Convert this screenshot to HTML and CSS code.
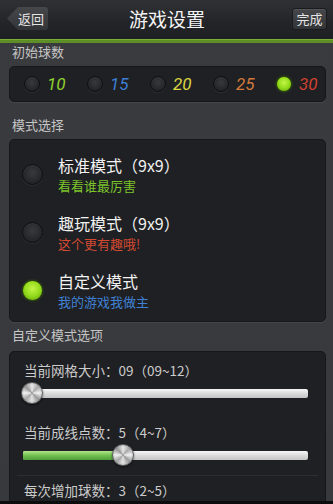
FILE: index.html
```html
<!DOCTYPE html>
<html lang="zh">
<head>
<meta charset="utf-8">
<link rel="stylesheet" href="styles.css">
</head>
<body>
<div class="screen">
  <header class="topbar">
    <div class="topbar-left"><span class="btn-back">返回</span></div>
    <h1 class="title">游戏设置</h1>
    <div class="topbar-right"><span class="btn-done">完成</span></div>
  </header>

  <div class="section-label label-first">初始球数</div>
  <div class="panel count-panel">
    <div class="count-item"><span class="radio radio-sm"></span><span class="num num-green">10</span></div>
    <div class="count-item"><span class="radio radio-sm"></span><span class="num num-blue">15</span></div>
    <div class="count-item"><span class="radio radio-sm"></span><span class="num num-yellow">20</span></div>
    <div class="count-item"><span class="radio radio-sm"></span><span class="num num-orange">25</span></div>
    <div class="count-item"><span class="radio radio-sm radio-on"></span><span class="num num-red">30</span></div>
  </div>

  <div class="section-label label-second">模式选择</div>
  <div class="panel mode-panel">
    <div class="mode-item">
      <span class="radio radio-lg"></span>
      <div class="mode-text">
        <div class="mode-title">标准模式（9x9）</div>
        <div class="mode-sub sub-green">看看谁最厉害</div>
      </div>
    </div>
    <div class="mode-item">
      <span class="radio radio-lg"></span>
      <div class="mode-text">
        <div class="mode-title">趣玩模式（9x9）</div>
        <div class="mode-sub sub-red">这个更有趣哦!</div>
      </div>
    </div>
    <div class="mode-item">
      <span class="radio radio-lg radio-on"></span>
      <div class="mode-text">
        <div class="mode-title">自定义模式</div>
        <div class="mode-sub sub-blue">我的游戏我做主</div>
      </div>
    </div>
  </div>

  <div class="section-label label-third">自定义模式选项</div>
  <div class="panel options-panel">
    <div class="opt-label">当前网格大小：09（09~12）</div>
    <div class="slider">
      <div class="track"><div class="fill" style="width:0px"></div></div>
      <span class="thumb" style="left:-2px"></span>
    </div>
    <div class="opt-label opt-gap">当前成线点数：5（4~7）</div>
    <div class="slider">
      <div class="track"><div class="fill" style="width:95px"></div></div>
      <span class="thumb" style="left:89px"></span>
    </div>
    <div class="separator"></div>
    <div class="opt-label">每次增加球数：3（2~5）</div>
  </div>

  <div class="bottom-strip"></div>
</div>
</body>
</html>
```

FILE: styles.css
```css
* { box-sizing: border-box; }
html, body { margin: 0; padding: 0; }
body {
  background: #3a3b3f;
  font-family: "Noto Sans CJK SC", "Noto Sans", sans-serif;
  color: #d0d0d0;
}
.screen {
  position: relative;
  width: 333px;
  height: 504px;
  overflow: hidden;
  background: linear-gradient(#3a3b3f, #38393d);
}

/* top bar */
.topbar {
  height: 43px;
  display: grid;
  grid-template-columns: 1fr auto 1fr;
  align-items: center;
  padding: 0 6px 3px 7px;
  background: linear-gradient(#303134, #232427 60%, #1e1f22);
  border-bottom: 3px solid #5e8e26;
  box-shadow: inset 0 -1px 0 #7fae38;
}
.topbar-left { display: flex; justify-content: flex-start; }
.topbar-right { display: flex; justify-content: flex-end; }
.title {
  margin: 0;
  font-size: 19px;
  font-weight: normal;
  color: #f4f4f4;
  line-height: 28px;
}
.btn-back {
  display: flex;
  align-items: center;
  justify-content: flex-end;
  width: 41px;
  height: 23px;
  padding-right: 4px;
  font-size: 13px;
  line-height: 19px;
  color: #e4e4e4;
  background: linear-gradient(#46474a, #333437);
  clip-path: polygon(11px 0, 100% 0, 100% 100%, 11px 100%, 0 50%);
  border-radius: 0 3px 3px 0;
}
.btn-done {
  display: flex;
  align-items: center;
  justify-content: center;
  width: 35px;
  height: 22px;
  font-size: 13px;
  line-height: 19px;
  color: #e4e4e4;
  background: linear-gradient(#46474a, #333437);
  border: 1px solid #1a1b1d;
  border-radius: 3px;
  box-shadow: inset 0 1px 0 rgba(255,255,255,0.08);
}

/* section labels */
.section-label {
  font-size: 13px;
  line-height: 20px;
  color: #c6c6c6;
  padding-left: 12px;
}
.label-first { margin-top: -1px; margin-bottom: 4px; }
.label-second { margin-top: 13px; margin-bottom: 4px; }
.label-third { margin-top: 3px; margin-bottom: 6px; }

/* panels */
.panel {
  margin: 0 7px 0 9px;
  background: #1f2023;
  border: 1px solid #16171a;
  border-radius: 5px;
  box-shadow: 0 1px 0 rgba(255,255,255,0.06);
}

/* ball count */
.count-panel {
  height: 36px;
  display: grid;
  grid-template-columns: repeat(5, 1fr);
  align-items: center;
}
.count-item {
  display: flex;
  align-items: center;
  padding-left: 14px;
  gap: 7px;
}
.num {
  font-family: Roboto, "Liberation Sans", sans-serif;
  font-style: italic;
  font-size: 17px;
  line-height: 20px;
}
.num-green { color: #8fd12e; }
.num-blue { color: #3c7fd4; }
.num-yellow { color: #dcd640; }
.num-orange { color: #d2793a; }
.num-red { color: #d2402f; }

/* radios */
.radio {
  display: block;
  flex: none;
  border-radius: 50%;
  background: radial-gradient(circle at 50% 40%, #38393c 0, #28292c 55%, #18191b 100%);
  border: 1px solid #0f1011;
  box-shadow: 0 1px 1px rgba(255,255,255,0.07), inset 0 1px 1px rgba(255,255,255,0.06);
}
.radio-sm { width: 16px; height: 16px; }
.radio-lg { width: 21px; height: 21px; }
.radio-on {
  background: radial-gradient(circle at 50% 40%, #c2f547 0, #95dc1c 50%, #5f9c0c 100%);
  border: 1px solid #2d4a0b;
  box-shadow: 0 0 2px rgba(120,200,20,0.35);
}

/* modes */
.mode-panel { padding: 5px 0 2px; }
.mode-item {
  height: 58px;
  display: flex;
  align-items: center;
  padding-left: 12px;
  gap: 15px;
}
.mode-text { display: flex; flex-direction: column; }
.mode-title {
  font-size: 16px;
  line-height: 23px;
  color: #f2f2f2;
}
.mode-sub {
  font-size: 13px;
  line-height: 19px;
  margin-top: -1px;
}
.sub-green { color: #7cc42a; }
.sub-red { color: #d44a32; }
.sub-blue { color: #3f80d4; }

/* options */
.options-panel {
  padding: 8px 17px 20px 13px;
}
.opt-label {
  font-size: 13.5px;
  line-height: 20px;
  color: #cbcbcb;
  padding-left: 1px;
}
.opt-gap { margin-top: 16px; }
.slider {
  position: relative;
  height: 26px;
  display: flex;
  align-items: center;
}
.track {
  width: 100%;
  height: 9px;
  border-radius: 2px;
  background: linear-gradient(#f6f6f6, #d6d6d6 60%, #c4c4c4);
  overflow: hidden;
}
.fill {
  height: 100%;
  background: linear-gradient(#b2e58a, #72c050 50%, #4f9d3a);
}
.thumb {
  position: absolute;
  top: 2px;
  width: 22px;
  height: 22px;
  border-radius: 50%;
  border: 1px solid #5d5e60;
  background:
    radial-gradient(circle, rgba(255,255,255,0.0) 0, rgba(255,255,255,0) 55%, rgba(60,60,60,0.35) 100%),
    conic-gradient(#e8e8e8, #a9a9a9, #f2f2f2, #9a9a9a, #e4e4e4, #a6a6a6, #f0f0f0, #999, #e8e8e8);
  box-shadow: 0 1px 2px rgba(0,0,0,0.6);
}
.separator {
  height: 1px;
  background: #2c2d31;
  margin: 7px -10px 4px -6px;
}

.bottom-strip {
  position: absolute;
  left: 0;
  right: 0;
  bottom: 0;
  height: 3px;
  background: #0c0c0d;
}
```
